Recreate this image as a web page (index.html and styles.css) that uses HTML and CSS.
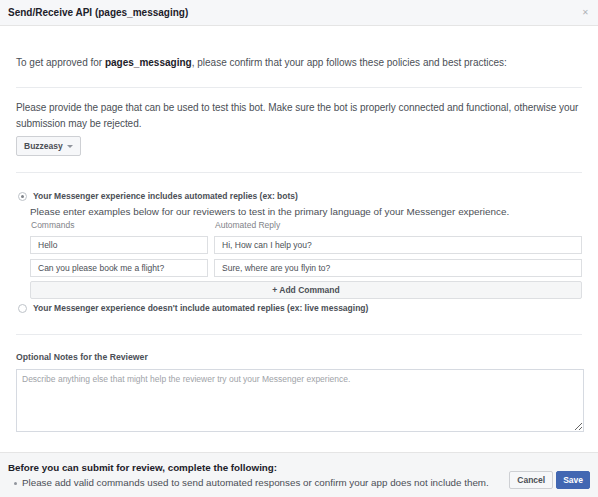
FILE: index.html
```html
<!DOCTYPE html>
<html>
<head>
<meta charset="utf-8">
<link rel="stylesheet" href="styles.css">
</head>
<body>
<div class="dialog">
  <div class="header">
    <span class="title">Send/Receive API (pages_messaging)</span>
    <span class="close">&#x2715;</span>
  </div>
  <div class="body">
    <p class="intro">To get approved for <b>pages_messaging</b>, please confirm that your app follows these policies and best practices:</p>
    <div class="section">
      <p class="provide">Please provide the page that can be used to test this bot. Make sure the bot is properly connected and functional, otherwise your submission may be rejected.</p>
      <button class="btn page-btn">Buzzeasy <span class="caret"></span></button>
    </div>
    <div class="section radios">
      <label class="radio-row"><span class="radio checked"></span><span class="radio-label">Your Messenger experience includes automated replies (ex: bots)</span></label>
      <div class="commands">
        <p class="hint">Please enter examples below for our reviewers to test in the primary language of your Messenger experience.</p>
        <div class="grid">
          <div class="col-label">Commands</div>
          <div class="col-label">Automated Reply</div>
          <div class="field">Hello</div>
          <div class="field">Hi, How can I help you?</div>
          <div class="field">Can you please book me a flight?</div>
          <div class="field">Sure, where are you flyin to?</div>
        </div>
        <button class="btn add-btn">+ Add Command</button>
      </div>
      <label class="radio-row second"><span class="radio"></span><span class="radio-label">Your Messenger experience doesn't include automated replies (ex: live messaging)</span></label>
    </div>
    <div class="notes">
      <div class="notes-label">Optional Notes for the Reviewer</div>
      <textarea placeholder="Describe anything else that might help the reviewer try out your Messenger experience."></textarea>
    </div>
  </div>
  <div class="footer">
    <div class="todo">
      <div class="todo-title">Before you can submit for review, complete the following:</div>
      <ul>
        <li>Please add valid commands used to send automated responses or confirm your app does not include them.</li>
      </ul>
    </div>
    <div class="actions">
      <button class="btn cancel">Cancel</button>
      <button class="btn save">Save</button>
    </div>
  </div>
</div>
</body>
</html>
```

FILE: styles.css
```css
* { box-sizing: border-box; }
html, body { margin: 0; padding: 0; background: #fff; }
body { font-family: "Liberation Sans", Arial, sans-serif; color: #4b4f56; }
p { margin: 0; }

.dialog { width: 598px; height: 497px; display: flex; flex-direction: column; }

.header {
  height: 26px;
  background: #f6f7f9;
  border-bottom: 1px solid #e5e5e5;
  display: flex;
  align-items: center;
  justify-content: space-between;
  padding: 0 8px 0 8px;
}
.title { font-size: 10px; font-weight: bold; color: #1d2129; }
.close { font-size: 8px; color: #b0b3b8; margin-right: 1px; }

.body { flex: 1; padding: 29px 16px 0 16px; }

.intro { font-size: 10px; line-height: 16px; color: #4b4f56; padding-bottom: 16px; border-bottom: 1px solid #e9ebee; }
.intro b { color: #1d2129; }

.section { border-bottom: 1px solid #e9ebee; }
.provide { font-size: 10px; line-height: 16px; padding-top: 12px; margin-right: -6px; letter-spacing: -0.05px; }

.btn {
  font-family: "Liberation Sans", Arial, sans-serif;
  font-weight: bold;
  font-size: 8.5px;
  border: 1px solid #ced0d4;
  background: #f6f7f9;
  color: #4b4f56;
  border-radius: 2px;
  padding: 0 8px;
  height: 19px;
  cursor: pointer;
}
.page-btn { margin: 4px 0 16px 0; display: inline-flex; align-items: center; gap: 4px; height: 20px; padding: 0 7px; }
.caret { width: 0; height: 0; border-left: 3px solid transparent; border-right: 3px solid transparent; border-top: 3px solid #90949c; margin-top: 1px; }

.radios { padding: 17px 0 20px 0; }
.radio-row { display: flex; align-items: center; gap: 6px; padding-left: 2px; height: 12px; }
.radio { width: 9px; height: 9px; border: 1px solid #bec3c9; border-radius: 50%; background: #fff; display: flex; align-items: center; justify-content: center; }
.radio.checked::after { content: ""; width: 3px; height: 3px; border-radius: 50%; background: #7f8389; }
.radio-label { font-size: 8.5px; font-weight: bold; color: #4b4f56; }
.radio-row.second { margin-top: 3px; }

.commands { padding-left: 14px; }
.hint { font-size: 9.9px; line-height: 14px; margin-top: 3px; }
.grid { display: grid; grid-template-columns: 178px 1fr; column-gap: 6px; row-gap: 5px; margin-top: 1px; }
.col-label { font-size: 8.5px; color: #7f8389; line-height: 11px; margin-left: 1px; }
.field {
  height: 18px;
  border: 1px solid #dddfe2;
  font-size: 8.5px;
  color: #4b4f56;
  display: flex;
  align-items: center;
  padding-left: 7px;
}
.add-btn { display: block; width: 100%; margin-top: 4px; height: 18px; font-size: 8.5px; color: #4b4f56; background: #f5f6f7; border-color: #dddfe2; }

.notes { padding-top: 17px; }
.notes-label { font-size: 8.7px; font-weight: bold; color: #4b4f56; line-height: 10px; }
textarea {
  display: block;
  width: 568px;
  height: 63px;
  margin-top: 7px;
  border: 1px solid #d6dae1;
  font-family: "Liberation Sans", Arial, sans-serif;
  font-size: 8.5px;
  padding: 4px 5px;
  resize: vertical;
}
textarea::placeholder { color: #a0a3a8; }

.footer {
  height: 45px;
  background: #f5f6f7;
  border-top: 1px solid #e5e5e5;
  display: flex;
  align-items: flex-start;
  justify-content: space-between;
  padding: 8px 8px 0 8px;
}
.todo-title { font-size: 9.8px; font-weight: bold; color: #1d2129; line-height: 14px; }
.todo ul { margin: 1px 0 0 0; padding-left: 14px; list-style: none; }
.todo li { font-size: 9.8px; color: #4b4f56; line-height: 14px; position: relative; }
.todo li::before { content: ""; position: absolute; left: -8px; top: 6px; width: 3px; height: 3px; background: #90949c; border-radius: 50%; }
.actions { display: flex; gap: 3px; margin-top: 10px; }
.cancel { height: 18px; padding: 0 7px; font-size: 8.5px; }
.save { height: 18px; padding: 0 6px; font-size: 8.5px; background: #4267b2; border-color: #4267b2; color: #fff; }
```
